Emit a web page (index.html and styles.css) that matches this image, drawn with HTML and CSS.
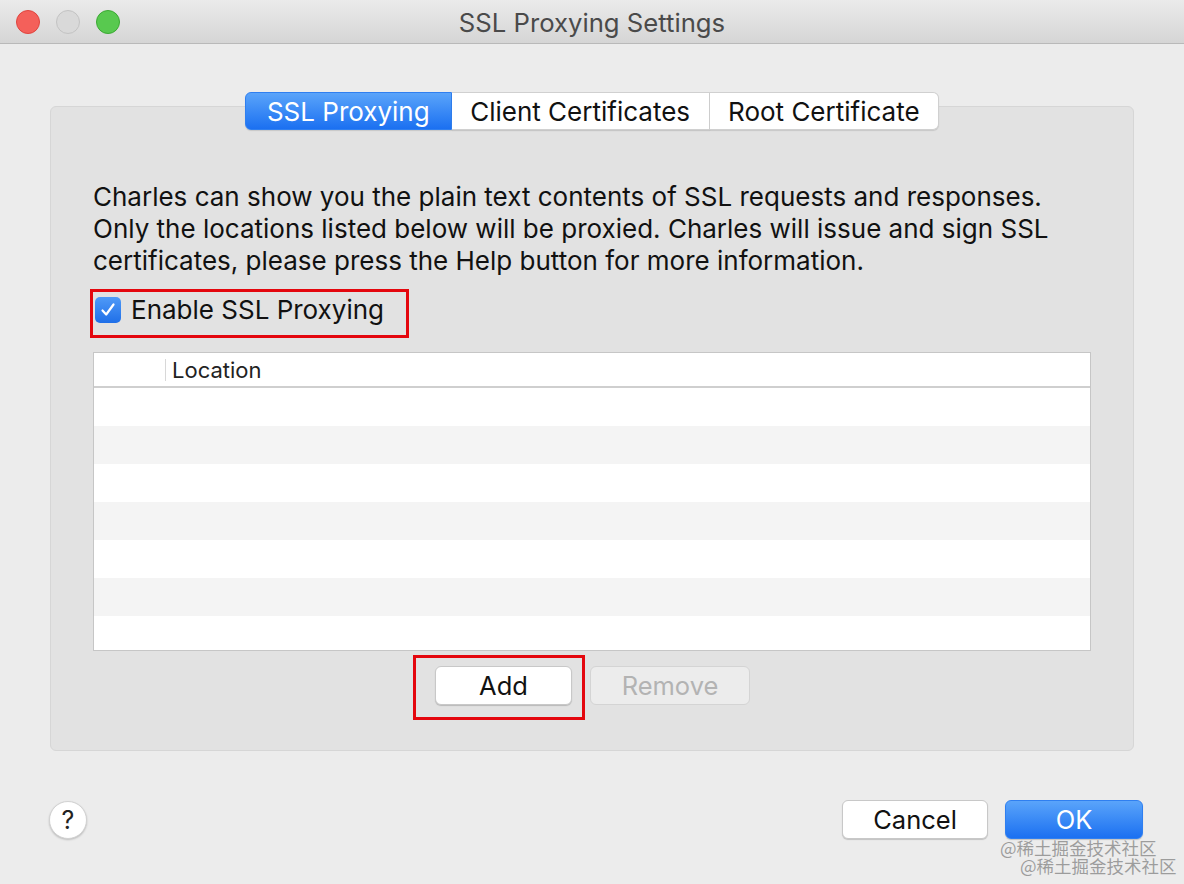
FILE: index.html
```html
<!DOCTYPE html>
<html lang="en">
<head>
  <meta charset="UTF-8">
  <title>SSL Proxying Settings</title>
  <link rel="stylesheet" href="styles.css">
</head>
<body>
  <div class="window">
    <div class="titlebar">
      <div class="lights">
        <span class="light close"></span>
        <span class="light min"></span>
        <span class="light zoom"></span>
      </div>
      <div class="title">SSL Proxying Settings</div>
    </div>

    <div class="group">
      <div class="tabs">
        <div class="tab active">SSL Proxying</div>
        <div class="tab">Client Certificates</div>
        <div class="tab">Root Certificate</div>
      </div>

      <p class="intro">Charles can show you the plain text contents of SSL requests and responses.
Only the locations listed below will be proxied. Charles will issue and sign SSL
certificates, please press the Help button for more information.</p>

      <div class="check-row mark">
        <span class="checkbox">
          <svg width="20" height="20" viewBox="0 0 20 20"><path d="M4.5 10.5 L8.2 14.5 L15.5 4.5" fill="none" stroke="#fff" stroke-width="2.2" stroke-linecap="round" stroke-linejoin="round"/></svg>
        </span>
        <span>Enable SSL Proxying</span>
      </div>

      <div class="table">
        <div class="table-head">
          <div class="col-first"></div>
          <div class="col-location">Location</div>
        </div>
        <div class="row"></div>
        <div class="row alt"></div>
        <div class="row"></div>
        <div class="row alt"></div>
        <div class="row"></div>
        <div class="row alt"></div>
        <div class="row last"></div>
      </div>

      <div class="table-buttons">
        <div class="add-wrap mark">
          <button class="btn add">Add</button>
        </div>
        <button class="btn remove" disabled>Remove</button>
      </div>
    </div>

    <div class="footer">
      <button class="help">?</button>
      <div class="footer-buttons">
        <button class="btn cancel">Cancel</button>
        <button class="btn ok">OK</button>
      </div>
    </div>

    <div class="watermark">
      <span>@稀土掘金技术社区</span>
      <span class="second">@稀土掘金技术社区</span>
    </div>
  </div>
</body>
</html>
```

FILE: styles.css
```css
* {
  margin: 0;
  padding: 0;
  box-sizing: border-box;
}

body {
  width: 1184px;
  height: 884px;
  overflow: hidden;
  font-family: Inter, "Noto Sans CJK SC", sans-serif;
  color: #111;
  background: #ececec;
}

.window {
  position: relative;
  width: 1184px;
  height: 884px;
  background: #ececec;
}

.titlebar {
  position: relative;
  height: 44px;
  display: flex;
  align-items: center;
  justify-content: center;
  background: linear-gradient(#ebebeb, #d5d5d5);
  border-bottom: 1px solid #b9b9b9;
}

.lights {
  position: absolute;
  left: 16px;
  top: 10px;
  display: flex;
  gap: 16px;
}

.light {
  width: 24px;
  height: 24px;
  border-radius: 50%;
}

.close {
  background: #f4605a;
  border: 1px solid #e0443e;
}

.min {
  background: #d9d9d9;
  border: 1px solid #c3c3c3;
}

.zoom {
  background: #58c94f;
  border: 1px solid #3ba933;
}

.title {
  font-size: 25.7px;
  color: #4a4a4a;
  padding-top: 2px;
}

.group {
  margin: 62px 0 0 50px;
  width: 1084px;
  height: 645px;
  background: #e2e2e2;
  border: 1px solid #d6d6d6;
  border-radius: 6px;
  padding: 0 42px;
}

.tabs {
  display: flex;
  justify-content: center;
  margin-top: -15px;
}

.tab {
  height: 38px;
  line-height: 37px;
  padding: 0 18.5px;
  font-size: 26px;
  background: #fff;
  border: 1px solid #d0d0d0;
  border-left: none;
  box-shadow: 0 1px 1px rgba(0, 0, 0, 0.12);
}

.tab:last-child {
  border-radius: 0 6px 6px 0;
}

.tab.active {
  color: #fff;
  background: linear-gradient(#5aa4fa, #1b70f1);
  border: 1px solid #2f7ff0;
  border-radius: 6px 0 0 6px;
  padding: 0 21px;
}

.intro {
  margin-top: 51px;
  font-size: 26px;
  line-height: 32px;
  white-space: pre-line;
  color: #111;
}

.mark {
  border: 3px solid #e4070e;
}

.check-row {
  display: inline-flex;
  align-items: center;
  gap: 10px;
  margin: 12px 0 0 -3px;
  width: 319px;
  height: 49px;
  padding: 0 0 8px 2px;
  font-size: 26px;
}

.checkbox {
  width: 26px;
  height: 26px;
  border-radius: 5px;
  background: linear-gradient(#4f9af7, #1f6fe8);
  display: flex;
  align-items: center;
  justify-content: center;
}

.table {
  margin-top: 14px;
  width: 998px;
  border: 1px solid #c6c6c6;
  background: #fff;
}

.table-head {
  display: flex;
  align-items: center;
  height: 35px;
  border-bottom: 2px solid #cfcfcf;
  font-size: 22px;
  color: #222;
}

.col-first {
  width: 72px;
  height: 22px;
  border-right: 1px solid #d8d8d8;
}

.col-location {
  padding-left: 6px;
}

.row {
  height: 38px;
  background: #fff;
}

.row.alt {
  background: #f4f4f4;
}

.row.last {
  height: 34px;
}

.table-buttons {
  display: flex;
  align-items: flex-start;
  gap: 5px;
  margin-top: 4px;
  padding-left: 320px;
}

.add-wrap {
  width: 172px;
  height: 65px;
  padding: 8px 0 0 19px;
}

.btn {
  font-family: Inter, sans-serif;
  font-size: 25.5px;
  height: 39px;
  border-radius: 6px;
  background: #fff;
  border: 1px solid #c8c8c8;
  box-shadow: 0 1px 1px rgba(0, 0, 0, 0.18);
  color: #111;
}

.add {
  width: 137px;
}

.remove {
  margin-top: 11px;
  width: 160px;
  background: #ececec;
  color: #b3b3b3;
  border-color: #d4d4d4;
  box-shadow: none;
}

.footer {
  display: flex;
  align-items: center;
  justify-content: space-between;
  margin-top: 49px;
  padding: 0 41px 0 49px;
}

.help {
  width: 38px;
  height: 38px;
  border-radius: 50%;
  background: #fff;
  border: 1px solid #d2d2d2;
  box-shadow: 0 1px 2px rgba(0, 0, 0, 0.2);
  font-family: Inter, sans-serif;
  font-size: 25px;
  color: #222;
}

.footer-buttons {
  display: flex;
  gap: 17px;
}

.cancel {
  width: 146px;
}

.ok {
  width: 138px;
  color: #fff;
  background: linear-gradient(#5aa4fa, #1b70f1);
  border-color: #2f7ff0;
}

.watermark {
  position: absolute;
  left: 1000px;
  top: 839px;
  display: flex;
  flex-direction: column;
  font-size: 17.5px;
  line-height: 18px;
  white-space: nowrap;
  color: rgba(130, 130, 130, 0.75);
  font-family: "Noto Sans CJK SC", sans-serif;
}

.watermark .second {
  padding-left: 20px;
}
```
